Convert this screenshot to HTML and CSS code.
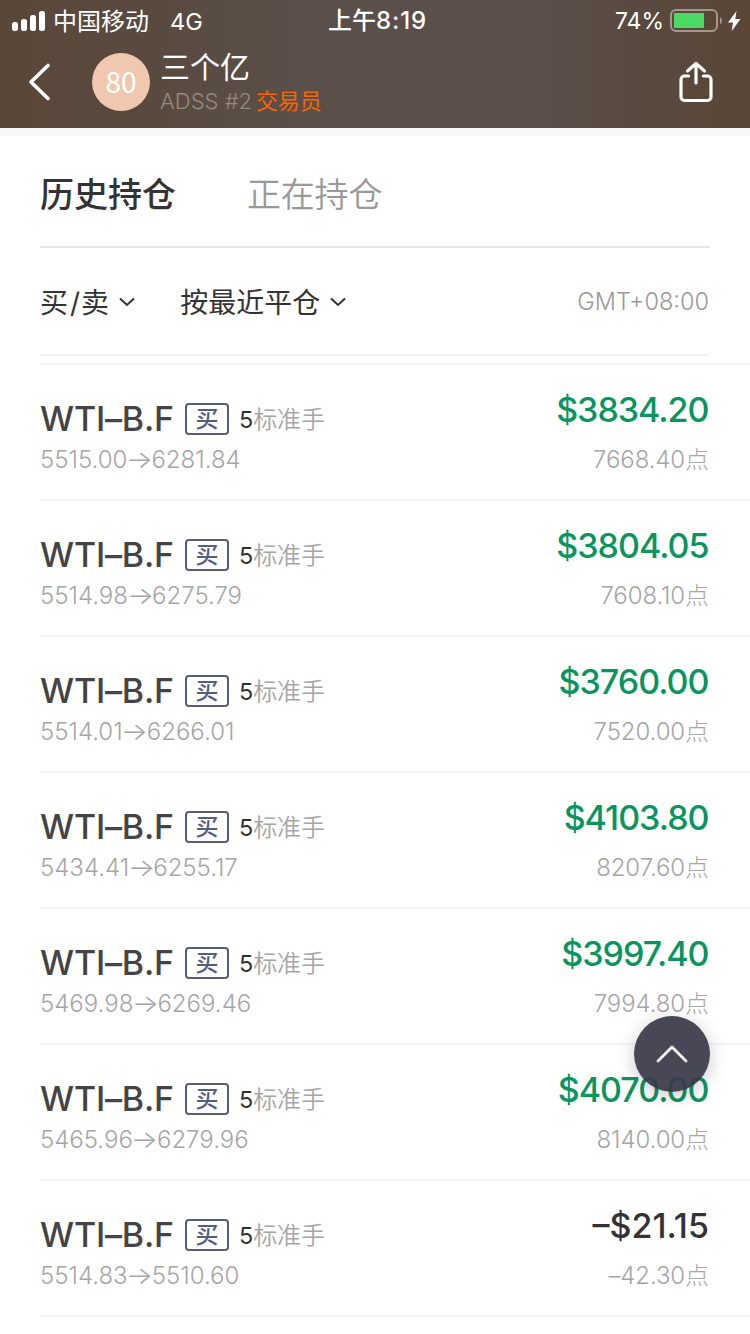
FILE: index.html
```html
<!DOCTYPE html>
<html lang="zh-CN">
<head>
<meta charset="utf-8">
<title>历史持仓</title>
<link rel="stylesheet" href="styles.css">
</head>
<body>
<div class="screen">
  <header class="top">
    <div class="status">
      <div class="status-left">
        <svg class="signal" width="34" height="20" viewBox="0 0 34 20" fill="#fff"><rect x="0" y="11" width="6" height="9" rx="2.5"/><rect x="9" y="8" width="6" height="12" rx="2.5"/><rect x="18" y="4" width="6" height="16" rx="2.5"/><rect x="27" y="0" width="6" height="20" rx="2.5"/></svg>
        <span class="carrier">中国移动</span>
        <span class="network">4G</span>
      </div>
      <div class="clock">上午<span class="clock-digits">8:19</span></div>
      <div class="status-right">
        <span class="percent">74%</span>
        <svg class="battery" width="54" height="24" viewBox="0 0 54 24"><rect x="1" y="1" width="46" height="21" rx="5" fill="none" stroke="#a3978e" stroke-width="2"/><rect x="4" y="4" width="30" height="15" rx="1" fill="#4cd964"/><path d="M50 8a4.4 4.4 0 0 1 0 7.5z" fill="#a3978e"/></svg>
        <svg class="bolt" width="13" height="20" viewBox="0 0 13 20"><path d="M8.5 0 0 11.5h5L3.7 20 12.500 8H7.300z" fill="#fff"/></svg>
      </div>
    </div>
    <div class="nav">
      <svg class="back" width="26" height="42" viewBox="0 0 26 42"><path d="M23 4.500 6 21l17 16.500" fill="none" stroke="#fff" stroke-width="3.600" stroke-linecap="round" stroke-linejoin="round"/></svg>
      <div class="avatar">80</div>
      <div class="who">
        <div class="name">三个亿</div>
        <div class="account"><span class="broker">ADSS #2</span><span class="role">交易员</span></div>
      </div>
      <svg class="share" width="34" height="42" viewBox="0 0 34 42" fill="none" stroke="#fff" stroke-width="3.200" stroke-linecap="round" stroke-linejoin="round"><path d="M9.500 15H5.500a3.500 3.500 0 0 0-3.500 3.500V36a3.500 3.500 0 0 0 3.500 3.500h23a3.500 3.500 0 0 0 3.500-3.500V18.500a3.500 3.500 0 0 0-3.500-3.500h-4"/><path d="M17 22V3M8.500 10 17 2.500 25.500 10"/></svg>
    </div>
  </header>

  <nav class="tabs">
    <span class="tab tab-active">历史持仓</span>
    <span class="tab">正在持仓</span>
  </nav>

  <div class="filters">
    <div class="filter">买<span class="slash">/</span>卖<svg class="caret" width="18" height="12" viewBox="0 0 18 12"><path d="M2 2.500 9 9l7-6.500" fill="none" stroke="#333" stroke-width="2"/></svg></div>
    <div class="filter filter-sort">按最近平仓<svg class="caret" width="18" height="12" viewBox="0 0 18 12"><path d="M2 2.500 9 9l7-6.500" fill="none" stroke="#333" stroke-width="2"/></svg></div>
    <div class="zone">GMT+08:00</div>
  </div>

  <main class="trades">
    <article class="trade">
      <div class="info"><div class="line"><span class="symbol">WTI–B.F</span><span class="side">买</span><span class="lots"><b>5</b>标准手</span></div><div class="prices">5515.00<i>→</i>6281.84</div></div>
      <div class="result"><div class="amount">$3834.20</div><div class="points">7668.40点</div></div>
    </article>
    <article class="trade">
      <div class="info"><div class="line"><span class="symbol">WTI–B.F</span><span class="side">买</span><span class="lots"><b>5</b>标准手</span></div><div class="prices">5514.98<i>→</i>6275.79</div></div>
      <div class="result"><div class="amount">$3804.05</div><div class="points">7608.10点</div></div>
    </article>
    <article class="trade">
      <div class="info"><div class="line"><span class="symbol">WTI–B.F</span><span class="side">买</span><span class="lots"><b>5</b>标准手</span></div><div class="prices">5514.01<i>→</i>6266.01</div></div>
      <div class="result"><div class="amount">$3760.00</div><div class="points">7520.00点</div></div>
    </article>
    <article class="trade">
      <div class="info"><div class="line"><span class="symbol">WTI–B.F</span><span class="side">买</span><span class="lots"><b>5</b>标准手</span></div><div class="prices">5434.41<i>→</i>6255.17</div></div>
      <div class="result"><div class="amount">$4103.80</div><div class="points">8207.60点</div></div>
    </article>
    <article class="trade">
      <div class="info"><div class="line"><span class="symbol">WTI–B.F</span><span class="side">买</span><span class="lots"><b>5</b>标准手</span></div><div class="prices">5469.98<i>→</i>6269.46</div></div>
      <div class="result"><div class="amount">$3997.40</div><div class="points">7994.80点</div></div>
    </article>
    <article class="trade">
      <div class="info"><div class="line"><span class="symbol">WTI–B.F</span><span class="side">买</span><span class="lots"><b>5</b>标准手</span></div><div class="prices">5465.96<i>→</i>6279.96</div></div>
      <div class="result"><div class="amount">$4070.00</div><div class="points">8140.00点</div></div>
    </article>
    <article class="trade">
      <div class="info"><div class="line"><span class="symbol">WTI–B.F</span><span class="side">买</span><span class="lots"><b>5</b>标准手</span></div><div class="prices">5514.83<i>→</i>5510.60</div></div>
      <div class="result"><div class="amount loss">–$21.15</div><div class="points">–42.30点</div></div>
    </article>
  </main>

  <div class="to-top"><svg width="34" height="20" viewBox="0 0 34 20"><path d="M3 17 17 3l14 14" fill="none" stroke="#fff" stroke-width="2.800" stroke-linecap="round" stroke-linejoin="round"/></svg></div>
</div>
</body>
</html>
```

FILE: styles.css
```css
* { box-sizing: border-box; }
body { margin: 0; background: #fff; }
.screen {
  position: relative;
  width: 750px;
  height: 1334px;
  overflow: hidden;
  font-family: Inter, "Noto Sans CJK SC", sans-serif;
  color: #333;
  white-space: nowrap;
}
.top {
  height: 136px;
  border-bottom: 8px solid #f7f7f7;
  background: linear-gradient(90deg, #594739 0%, #594a3f 20%, #5a4f49 40%, #5a4f4b 72%, #59493d 88%, #594638 100%);
  color: #fff;
}
.status { display: grid; grid-template-columns: 1fr auto 1fr; height: 40px; line-height: 40px; font-size: 23px; }
.status-left { display: flex; align-items: center; padding-left: 12px; }
.carrier { margin-left: 7px; padding-top: 2px; font-size: 24px; }
.network { margin-left: 21px; padding-top: 1px; font-size: 23.5px; }
.clock { padding-left: 5px; font-weight: 500; font-size: 24px; line-height: 42px; }
.clock-digits { font-weight: 550; font-size: 24px; letter-spacing: 0.9px; }
.status-right { display: flex; align-items: center; justify-content: flex-end; padding: 0 9px 0 0; }
.percent { font-size: 23px; }
.battery { margin-left: 6px; }
.bolt { margin-left: 4px; }
.nav { display: flex; height: 88px; padding: 0 37px 0 25px; }
.back { margin-top: 21px; }
.avatar {
  width: 58px; height: 58px; margin: 13px 0 0 41px;
  border-radius: 50%; background: #f0c8b0;
  font: 400 28px/56px "Noto Sans CJK SC", sans-serif; text-align: center;
}
.who { flex: 1; padding-left: 10px; }
.name { height: 48px; font-size: 30px; line-height: 55px; }
.account { height: 28px; line-height: 26px; font-size: 22px; color: #94897f; }
.broker { font-weight: 300; }
.role { margin-left: 4px; letter-spacing: -0.2px; color: #fa6400; }
.share { margin-top: 21px; }

.tabs { display: flex; gap: 71px; height: 112px; margin: 0 40px; border-bottom: 2px solid #e6e6e6; font-size: 34px; line-height: 117px; color: #999; }
.tab { font-weight: 350; letter-spacing: -0.2px; }
.tab-active { color: #333; font-weight: 500; letter-spacing: 0; }
.filters { display: flex; height: 108px; margin: 0 41px 7px 40px; border-bottom: 2px solid #f2f2f2; font-size: 28px; line-height: 108px; }
.filter { display: flex; padding-top: 3px; align-items: center; }
.slash { padding: 0 1px 0 2px; }
.caret { margin: 0 0 1px 9px; }
.filter-sort { margin-left: 44px; }
.zone { margin-left: auto; font-size: 23.5px; line-height: 108px; font-weight: 300; color: #999; }

.trades { margin-left: 40px; border-top: 2px solid #f3f3f3; }
.trade { display: flex; justify-content: space-between; height: 136px; padding-right: 41px; border-bottom: 2px solid #f3f3f3; }
.info { padding-top: 38px; }
.line { display: flex; height: 32px; line-height: 32px; }
.symbol { width: 145px; font-size: 34px; font-weight: 500; letter-spacing: -0.2px; color: #444; }
.side { width: 44px; height: 32px; border: 2px solid #545d7e; border-radius: 4px; color: #545d7e; font-size: 23px; line-height: 28px; font-weight: 500; text-align: center; }
.lots { margin-left: 10px; font-size: 24px; font-weight: 350; line-height: 33px; letter-spacing: -0.1px; color: #a6a6a6; }
.lots b { color: #333; font-weight: 400; font-size: 23.5px; }
.prices { margin-top: 9px; font-size: 24px; line-height: 32px; font-weight: 300; color: #a6a6a6; }
.prices i { display: inline-block; margin: 0 0.6px; font-style: normal; transform: scaleX(1.2); }
.result { padding-top: 24px; text-align: right; }
.amount { font-size: 34px; line-height: 41px; font-weight: 550; letter-spacing: -1px; margin-right: 0.5px; color: #0a9460; }
.loss { letter-spacing: 0; margin-right: 0; color: #333; }
.points { margin-top: 14px; font-size: 24px; line-height: 32px; font-weight: 300; letter-spacing: -0.1px; color: #a6a6a6; }
.to-top {
  position: absolute; left: 634px; top: 1016px;
  display: flex; align-items: center; justify-content: center;
  width: 76px; height: 76px; border-radius: 50%;
  background: rgba(58, 57, 73, 0.93);
  box-shadow: 0 4px 18px rgba(60, 60, 80, 0.28);
}
```
